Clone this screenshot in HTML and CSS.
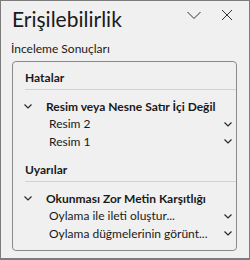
FILE: index.html
```html
<!DOCTYPE html>
<html lang="tr">
    <head>
        <meta charset="UTF-8">
        <title>Erişilebilirlik</title>
        <link rel="stylesheet" href="styles.css">
    </head>
    <body class="pane">

        <div class="pane-header">
            <div class="pane-title">Erişilebilirlik</div>
            <div class="pane-actions">
                <svg class="icon" width="14" height="14" viewBox="0 0 14 14">
                    <path d="M0.5 4 L7 10.5 L13.5 4" />
                </svg>
                <svg class="icon" width="14" height="14" viewBox="0 0 14 14">
                    <path d="M2 2 L12 12 M12 2 L2 12" />
                </svg>
            </div>
        </div>

        <div class="subtitle">İnceleme Sonuçları</div>

        <div class="results">

            <div class="section">
                <div class="section-head">Hatalar</div>
                <div class="group">
                    <svg class="chevron" width="8" height="6" viewBox="0 0 8 6"><path d="M0.5 1.5 L4 5 L7.5 1.5" /></svg>
                    <span>Resim veya Nesne Satır İçi Değil</span>
                </div>
                <div class="item">
                    <span class="item-text">Resim 2</span>
                    <svg class="chevron" width="8" height="6" viewBox="0 0 8 6"><path d="M0.5 1.5 L4 5 L7.5 1.5" /></svg>
                </div>
                <div class="item">
                    <span class="item-text">Resim 1</span>
                    <svg class="chevron" width="8" height="6" viewBox="0 0 8 6"><path d="M0.5 1.5 L4 5 L7.5 1.5" /></svg>
                </div>
            </div>

            <div class="section section-warn">
                <div class="section-head">Uyarılar</div>
                <div class="group">
                    <svg class="chevron" width="8" height="6" viewBox="0 0 8 6"><path d="M0.5 1.5 L4 5 L7.5 1.5" /></svg>
                    <span>Okunması Zor Metin Karşıtlığı</span>
                </div>
                <div class="item">
                    <span class="item-text">Oylama ile ileti oluştur...</span>
                    <svg class="chevron" width="8" height="6" viewBox="0 0 8 6"><path d="M0.5 1.5 L4 5 L7.5 1.5" /></svg>
                </div>
                <div class="item">
                    <span class="item-text">Oylama düğmelerinin görünt...</span>
                    <svg class="chevron" width="8" height="6" viewBox="0 0 8 6"><path d="M0.5 1.5 L4 5 L7.5 1.5" /></svg>
                </div>
            </div>

        </div>

    </body>
</html>
```

FILE: styles.css
```css
:root {
    --pane-bg: #f0f0f0;
    --text: #1a1a1a;
    --frame: #7c7c7c;
    --box-line: #8a8a8a;
    --rule: #d2d2d2;
}

* {
    box-sizing: border-box;
}

html,
body {
    margin: 0;
}

.pane {
    width: 250px;
    height: 260px;
    border: 1px solid var(--frame);
    border-bottom-width: 2px;
    background-color: var(--pane-bg);
    color: var(--text);
    font-family: Lato, "Noto Sans", sans-serif;
    font-size: 12px;
    overflow: hidden;
}

.pane-header {
    display: flex;
    align-items: flex-start;
    padding: 4px 15px 0 11px;
    height: 32px;
}

.pane-title {
    font-size: 21px;
    line-height: 28px;
}

.pane-actions {
    display: flex;
    gap: 19px;
    margin-left: auto;
    margin-top: 3px;
}

.icon path {
    fill: none;
    stroke: #333;
    stroke-width: 1;
}

.subtitle {
    padding-left: 10px;
    margin-top: 8px;
    line-height: 16px;
}

.results {
    margin: 4px 0 0 11px;
    width: 225px;
    height: 190px;
    border: 1px solid var(--box-line);
    border-radius: 4px;
}

.section-head {
    margin-left: 12px;
    padding: 8px 0 3px;
    border-bottom: 1px solid var(--rule);
    font-weight: 700;
    line-height: 16px;
}

.section-warn {
    margin-top: 4px;
}

.group {
    display: flex;
    align-items: center;
    height: 17.5px;
    margin-top: 7.5px;
    padding-left: 11px;
    font-weight: 700;
    white-space: nowrap;
}

.group .chevron {
    margin-right: 14px;
    flex: none;
}

.item {
    display: flex;
    align-items: center;
    height: 17.5px;
    padding: 0 4px 0 36px;
}

.item-text {
    flex: 1;
    white-space: nowrap;
    overflow: hidden;
}

.chevron path {
    fill: none;
    stroke: #2a2a2a;
    stroke-width: 1.2;
}
```
